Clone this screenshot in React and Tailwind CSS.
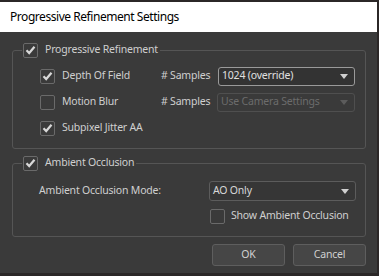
import React from "react";

function Check({ checked }) {
  return (
    <span className="flex h-[15px] w-[15px] shrink-0 items-center justify-center rounded-[2px] border border-[#6a6a6a] bg-[#3a3a3a]">
      {checked && (
        <svg width="11" height="10" viewBox="0 0 11 10">
          <path d="M1.5 5.2 L4.2 8 L9.5 1.8" fill="none" stroke="#d8d8d8" strokeWidth="2.2" />
        </svg>
      )}
    </span>
  );
}

function Select({ value, disabled, focus, className }) {
  return (
    <div
      className={
        "flex items-center justify-between rounded-[3px] border pl-[3px] pr-[6px] " +
        (disabled
          ? "border-[#4f4f4f] text-[#6c6c6c]"
          : focus
          ? "border-[#9a9a9a] bg-[#333333] text-[#e0e0e0]"
          : "border-[#5c5c5c] bg-[#363636] text-[#d8d8d8]") +
        " " +
        className
      }
    >
      <span className="whitespace-nowrap">{value}</span>
      <svg width="8" height="5" viewBox="0 0 8 5">
        <path d="M0 0 H8 L4 5 Z" fill={disabled ? "#5c5c5c" : "#d0d0d0"} />
      </svg>
    </div>
  );
}

export default function App() {
  return (
    <div
      className="h-[276px] w-[379px] bg-[#2b2727] pt-[2px]"
      style={{ fontFamily: '"Noto Sans", "Liberation Sans", sans-serif' }}
    >
      <div className="flex h-[271px] w-[377px] flex-col bg-[#3a3a3a]">
        <div className="flex h-[30px] items-center bg-white pl-[10px] text-[12px] tracking-[-0.45px] text-black">
          Progressive Refinement Settings
        </div>
        <div className="flex flex-col pl-[12px] pr-[11px] pt-[10px] text-[10.5px] tracking-[-0.2px] text-[#cfcfcf]">
          <fieldset className="rounded-[3px] border border-[#555555]">
            <legend className="ml-[9px] flex h-[16px] items-center gap-[7px] px-[1px]">
              <Check checked />
              <span className="pr-[1px]">Progressive Refinement</span>
            </legend>
            <div className="mt-[8px] flex flex-col gap-[6px] pb-[10px] pl-[27px] pr-[10px]">
              <div className="flex h-[20px] items-center">
                <div className="flex w-[121px] items-center gap-[7px]">
                  <Check checked />
                  <span>Depth Of Field</span>
                </div>
                <span className="w-[57px]"># Samples</span>
                <Select value="1024 (override)" focus className="h-[19px] w-[137px]" />
              </div>
              <div className="flex h-[20px] items-center">
                <div className="flex w-[121px] items-center gap-[7px]">
                  <Check />
                  <span>Motion Blur</span>
                </div>
                <span className="w-[56px]"># Samples</span>
                <Select value="Use Camera Settings" disabled className="h-[19px] w-[138px]" />
              </div>
              <div className="flex h-[20px] items-center">
                <div className="flex items-center gap-[7px]">
                  <Check checked />
                  <span>Subpixel Jitter AA</span>
                </div>
              </div>
            </div>
          </fieldset>
          <fieldset className="mt-[6px] rounded-[3px] border border-[#555555]">
            <legend className="ml-[9px] flex h-[16px] items-center gap-[7px] px-[1px]">
              <Check checked />
              <span className="pr-[1px]">Ambient Occlusion</span>
            </legend>
            <div className="pb-[12px] pl-[26px] pr-[9px]">
              <div className="mt-[10px] flex h-[20px] items-center justify-between">
                <span>Ambient Occlusion Mode:</span>
                <Select value="AO Only" className="h-[20px] w-[147px]" />
              </div>
              <div className="mt-[7px] flex h-[16px] items-center gap-[6px] pl-[171px]">
                <Check />
                <span className="whitespace-nowrap">Show Ambient Occlusion</span>
              </div>
            </div>
          </fieldset>
          <div className="mt-[7px] flex justify-end gap-[8px]">
            <button className="h-[22px] w-[73px] rounded-[3px] border border-[#5e5e5e] bg-[#464646] text-[#d0d0d0]">
              OK
            </button>
            <button className="h-[22px] w-[73px] rounded-[3px] border border-[#5e5e5e] bg-[#464646] text-[#d0d0d0]">
              Cancel
            </button>
          </div>
        </div>
      </div>
    </div>
  );
}
